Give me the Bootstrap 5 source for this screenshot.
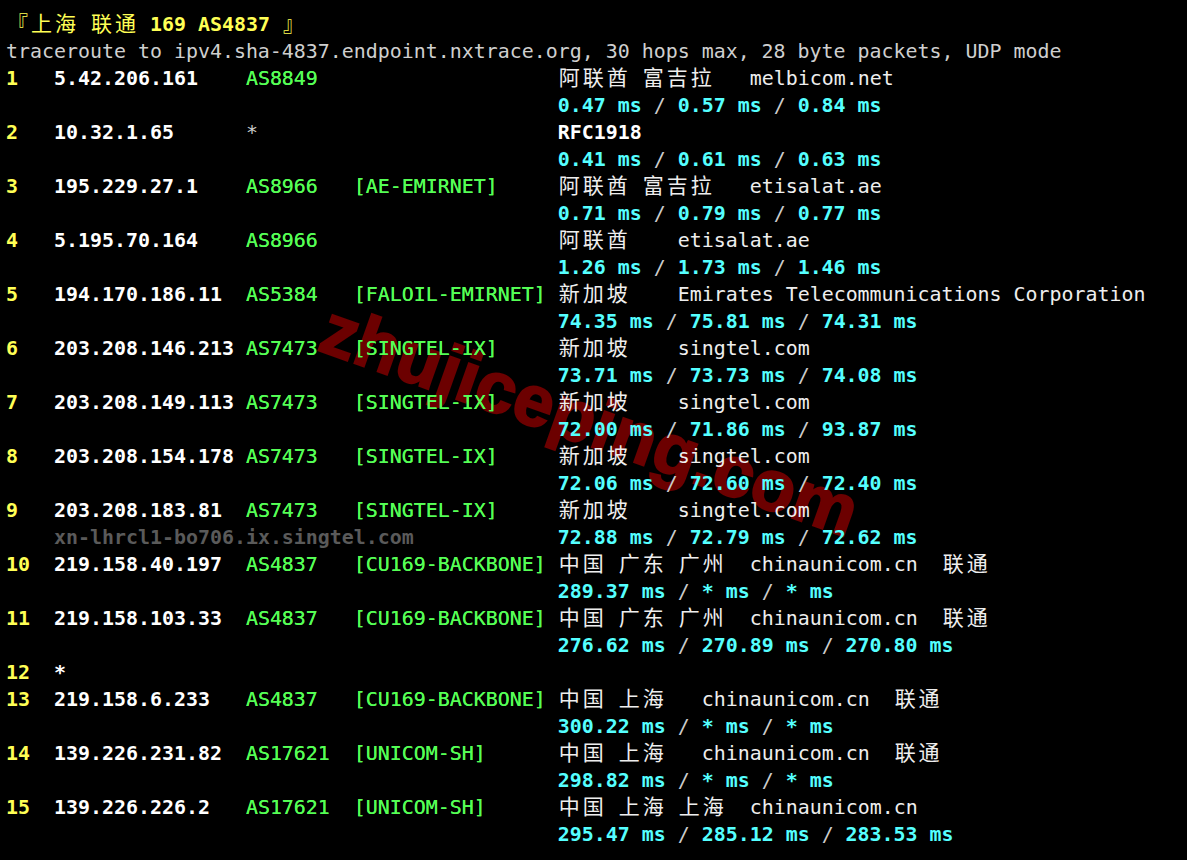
<!doctype html>
<html lang="zh">
<head>
<meta charset="utf-8">
<title>traceroute</title>
<link href="https://cdn.jsdelivr.net/npm/bootstrap@5.3.0/dist/css/bootstrap.min.css" rel="stylesheet">
<style>
html,body{background:#000;}
.term-page{position:relative;z-index:0;width:1187px;height:860px;overflow:hidden;background:#000;padding:11px 0 0 6px;font-family:"DejaVu Sans Mono","Noto Sans CJK SC",monospace;font-size:19.93px;line-height:27px;color:#cfcfcf;}
.term-line{white-space:pre;height:27px;}
.cj{font-family:"Noto Sans CJK SC",sans-serif;font-size:21px;letter-spacing:3px;font-weight:400;line-height:0;position:relative;left:1px;}
.c-y{color:#ffff55;font-weight:700}
.c-yn{color:#ffff55}
.c-w{color:#fff;font-weight:700}
.c-n{color:#eee}
.c-g{color:#55ff55;text-shadow:0 0 .4px #55ff55}
.c-c{color:#55ffff;font-weight:700}
.c-s{color:#ccc;font-weight:400}
.c-d{color:#5a5a5a;font-weight:700}
.wm{position:absolute;z-index:-1;left:300px;top:384px;width:580px;text-align:center;font-family:"Liberation Sans",sans-serif;font-weight:700;font-size:72px;line-height:1;color:#6c0000;-webkit-text-stroke:2px #6c0000;transform:rotate(19.5deg);white-space:nowrap;pointer-events:none;}
</style>
</head>
<body class="m-0">
<main class="term-page">
<div class="wm">zhujiceping.com</div>
<div class="term-line c-yn"><span class="cj">『上海</span> <span class="cj">联通</span> <span class="c-y">169 AS4837 </span><span class="cj">』</span></div>
<div class="term-line">traceroute to ipv4.sha-4837.endpoint.nxtrace.org, 30 hops max, 28 byte packets, UDP mode</div>
<div class="term-line"><span class="c-y">1   </span><span class="c-w">5.42.206.161    </span><span class="c-g">AS8849                    </span><span class="c-n cj">阿联酋</span> <span class="c-n cj">富吉拉</span><span class="c-n">   melbicom.net</span></div>
<div class="term-line">                                              <span class="c-c">0.47 ms <span class="c-s">/</span> 0.57 ms <span class="c-s">/</span> 0.84 ms</span></div>
<div class="term-line"><span class="c-y">2   </span><span class="c-w">10.32.1.65      </span><span class="c-s">*                         </span><span class="c-w">RFC1918</span></div>
<div class="term-line">                                              <span class="c-c">0.41 ms <span class="c-s">/</span> 0.61 ms <span class="c-s">/</span> 0.63 ms</span></div>
<div class="term-line"><span class="c-y">3   </span><span class="c-w">195.229.27.1    </span><span class="c-g">AS8966   [AE-EMIRNET]     </span><span class="c-n cj">阿联酋</span> <span class="c-n cj">富吉拉</span><span class="c-n">   etisalat.ae</span></div>
<div class="term-line">                                              <span class="c-c">0.71 ms <span class="c-s">/</span> 0.79 ms <span class="c-s">/</span> 0.77 ms</span></div>
<div class="term-line"><span class="c-y">4   </span><span class="c-w">5.195.70.164    </span><span class="c-g">AS8966                    </span><span class="c-n cj">阿联酋</span><span class="c-n">    etisalat.ae</span></div>
<div class="term-line">                                              <span class="c-c">1.26 ms <span class="c-s">/</span> 1.73 ms <span class="c-s">/</span> 1.46 ms</span></div>
<div class="term-line"><span class="c-y">5   </span><span class="c-w">194.170.186.11  </span><span class="c-g">AS5384   [FALOIL-EMIRNET] </span><span class="c-n cj">新加坡</span><span class="c-n">    Emirates Telecommunications Corporation</span></div>
<div class="term-line">                                              <span class="c-c">74.35 ms <span class="c-s">/</span> 75.81 ms <span class="c-s">/</span> 74.31 ms</span></div>
<div class="term-line"><span class="c-y">6   </span><span class="c-w">203.208.146.213 </span><span class="c-g">AS7473   [SINGTEL-IX]     </span><span class="c-n cj">新加坡</span><span class="c-n">    singtel.com</span></div>
<div class="term-line">                                              <span class="c-c">73.71 ms <span class="c-s">/</span> 73.73 ms <span class="c-s">/</span> 74.08 ms</span></div>
<div class="term-line"><span class="c-y">7   </span><span class="c-w">203.208.149.113 </span><span class="c-g">AS7473   [SINGTEL-IX]     </span><span class="c-n cj">新加坡</span><span class="c-n">    singtel.com</span></div>
<div class="term-line">                                              <span class="c-c">72.00 ms <span class="c-s">/</span> 71.86 ms <span class="c-s">/</span> 93.87 ms</span></div>
<div class="term-line"><span class="c-y">8   </span><span class="c-w">203.208.154.178 </span><span class="c-g">AS7473   [SINGTEL-IX]     </span><span class="c-n cj">新加坡</span><span class="c-n">    singtel.com</span></div>
<div class="term-line">                                              <span class="c-c">72.06 ms <span class="c-s">/</span> 72.60 ms <span class="c-s">/</span> 72.40 ms</span></div>
<div class="term-line"><span class="c-y">9   </span><span class="c-w">203.208.183.81  </span><span class="c-g">AS7473   [SINGTEL-IX]     </span><span class="c-n cj">新加坡</span><span class="c-n">    singtel.com</span></div>
<div class="term-line">    <span class="c-d">xn-lhrcl1-bo706.ix.singtel.com            </span><span class="c-c">72.88 ms <span class="c-s">/</span> 72.79 ms <span class="c-s">/</span> 72.62 ms</span></div>
<div class="term-line"><span class="c-y">10  </span><span class="c-w">219.158.40.197  </span><span class="c-g">AS4837   [CU169-BACKBONE] </span><span class="c-n cj">中国</span> <span class="c-n cj">广东</span> <span class="c-n cj">广州</span><span class="c-n">  chinaunicom.cn  </span><span class="c-n cj">联通</span></div>
<div class="term-line">                                              <span class="c-c">289.37 ms <span class="c-s">/</span> * ms <span class="c-s">/</span> * ms</span></div>
<div class="term-line"><span class="c-y">11  </span><span class="c-w">219.158.103.33  </span><span class="c-g">AS4837   [CU169-BACKBONE] </span><span class="c-n cj">中国</span> <span class="c-n cj">广东</span> <span class="c-n cj">广州</span><span class="c-n">  chinaunicom.cn  </span><span class="c-n cj">联通</span></div>
<div class="term-line">                                              <span class="c-c">276.62 ms <span class="c-s">/</span> 270.89 ms <span class="c-s">/</span> 270.80 ms</span></div>
<div class="term-line"><span class="c-y">12  </span><span class="c-w">*</span></div>
<div class="term-line"><span class="c-y">13  </span><span class="c-w">219.158.6.233   </span><span class="c-g">AS4837   [CU169-BACKBONE] </span><span class="c-n cj">中国</span> <span class="c-n cj">上海</span><span class="c-n">   chinaunicom.cn  </span><span class="c-n cj">联通</span></div>
<div class="term-line">                                              <span class="c-c">300.22 ms <span class="c-s">/</span> * ms <span class="c-s">/</span> * ms</span></div>
<div class="term-line"><span class="c-y">14  </span><span class="c-w">139.226.231.82  </span><span class="c-g">AS17621  [UNICOM-SH]      </span><span class="c-n cj">中国</span> <span class="c-n cj">上海</span><span class="c-n">   chinaunicom.cn  </span><span class="c-n cj">联通</span></div>
<div class="term-line">                                              <span class="c-c">298.82 ms <span class="c-s">/</span> * ms <span class="c-s">/</span> * ms</span></div>
<div class="term-line"><span class="c-y">15  </span><span class="c-w">139.226.226.2   </span><span class="c-g">AS17621  [UNICOM-SH]      </span><span class="c-n cj">中国</span> <span class="c-n cj">上海</span> <span class="c-n cj">上海</span><span class="c-n">  chinaunicom.cn</span></div>
<div class="term-line">                                              <span class="c-c">295.47 ms <span class="c-s">/</span> 285.12 ms <span class="c-s">/</span> 283.53 ms</span></div>
</main>
<script src="https://cdn.jsdelivr.net/npm/bootstrap@5.3.0/dist/js/bootstrap.bundle.min.js"></script>
</body>
</html>
